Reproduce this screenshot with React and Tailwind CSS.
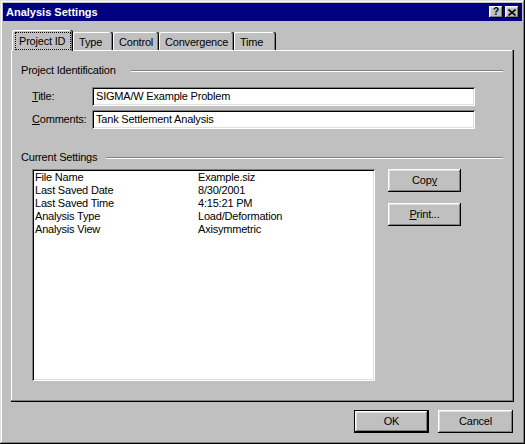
const raised =
    'shadow-[inset_-1px_-1px_#000,inset_1px_1px_#fff,inset_-2px_-2px_#808080,inset_2px_2px_#dfdfdf]'
const sunken =
    'shadow-[inset_1px_1px_#808080,inset_-1px_-1px_#fff,inset_2px_2px_#000,inset_-2px_-2px_#dfdfdf]'

const settings = [
    ['File Name', 'Example.siz'],
    ['Last Saved Date', '8/30/2001'],
    ['Last Saved Time', '4:15:21 PM'],
    ['Analysis Type', 'Load/Deformation'],
    ['Analysis View', 'Axisymmetric'],
]

function TitleButton({ children }) {
    return (
        <div className={`w-[14px] h-[12px] bg-[#c0c0c0] flex items-center justify-center ${raised}`}>{children}</div>
    )
}

function Tab({ label, width, active }) {
    if (active) {
        return (
            <div
                className={`relative z-10 -mb-px h-[21px] ${width} bg-[#c0c0c0] rounded-t-[2px] pl-[3px] pr-[2px] pt-[2px] pb-[1px] flex shadow-[inset_-1px_0_#000,inset_-2px_0_#808080,inset_1px_1px_#fff]`}
            >
                <div className="flex-1 border border-dotted border-black flex items-center pl-[3px]">{label}</div>
            </div>
        )
    }
    return (
        <div
            className={`h-[18px] ${width} rounded-t-[2px] flex items-center pl-[6px] pt-[2px] shadow-[inset_-1px_0_#000,inset_-2px_0_#808080,inset_1px_1px_#fff]`}
        >
            {label}
        </div>
    )
}

function GroupHeading({ label, labelWidth }) {
    return (
        <div className="flex items-center h-[13px] pr-[11px]">
            <span className={`shrink-0 ${labelWidth}`}>{label}</span>
            <div className="flex-1 h-[2px] border-t border-t-[#808080] border-b border-b-white" />
        </div>
    )
}

function Field({ label, value }) {
    return (
        <div className="flex items-center h-[19px] ml-[11px]">
            <span className="w-[60px] shrink-0">{label}</span>
            <div className={`w-[383px] h-[19px] bg-white flex items-center pl-[4px] ${sunken}`}>{value}</div>
        </div>
    )
}

function Button({ children, width = 'w-[73px]', isDefault = false }) {
    if (isDefault) {
        return (
            <div className={`${width} h-[23px] border border-black`}>
                <div className={`w-full h-full flex items-center justify-center bg-[#c0c0c0] ${raised}`}>{children}</div>
            </div>
        )
    }
    return (
        <div className={`${width} h-[23px] flex items-center justify-center bg-[#c0c0c0] ${raised}`}>{children}</div>
    )
}

export default function App() {
    return (
        <div className="w-[525px] h-[444px] bg-[#c0c0c0] p-[3px] flex flex-col text-black text-[11px] leading-[13px] tracking-[-0.2px] font-['Liberation_Sans',Arial,sans-serif] shadow-[inset_-1px_-1px_#000,inset_1px_1px_#dfdfdf,inset_-2px_-2px_#808080,inset_2px_2px_#fff]">
            <div className="h-[18px] bg-[#000080] flex items-center justify-between pl-[3px] pr-[3px]">
                <span className="text-white font-bold tracking-normal">Analysis Settings</span>
                <div className="flex gap-[2px]">
                    <TitleButton>
                        <span className="font-bold text-[10px] leading-none tracking-normal">?</span>
                    </TitleButton>
                    <TitleButton>
                        <svg width="8" height="7" viewBox="0 0 8 7">
                            <path d="M0.5 0.5 L7.5 6.5 M7.5 0.5 L0.5 6.5" stroke="#000" strokeWidth="1.6" fill="none" />
                        </svg>
                    </TitleButton>
                </div>
            </div>

            <div className="flex flex-col pl-[8px] pt-[9px]">
                <div className="flex items-end pl-[1px]">
                    <Tab label="Project ID" width="w-[61px]" active />
                    <Tab label="Type" width="w-[40px]" />
                    <Tab label="Control" width="w-[46px]" />
                    <Tab label="Convergence" width="w-[75px]" />
                    <Tab label="Time" width="w-[42px]" />
                </div>

                <div className="w-[503px] h-[352px] flex flex-col pl-[10px] pt-[14px] shadow-[inset_-1px_-1px_#000,inset_-2px_-2px_#808080,inset_1px_1px_#fff]">
                    <GroupHeading label="Project Identification" labelWidth="w-[110px]" />
                    <div className="flex flex-col gap-[4px] mt-[10px]">
                        <Field label={<><u>T</u>itle:</>} value="SIGMA/W Example Problem" />
                        <Field label={<><u>C</u>omments:</>} value="Tank Settlement Analysis" />
                    </div>

                    <div className="mt-[22px]">
                        <GroupHeading label="Current Settings" labelWidth="w-[85px]" />
                    </div>

                    <div className="flex mt-[5px] ml-[11px]">
                        <div className={`w-[343px] h-[212px] bg-white pt-[2px] pl-[3px] ${sunken}`}>
                            {settings.map(([name, value]) => (
                                <div key={name} className="flex h-[13px]">
                                    <span className="w-[163px] shrink-0">{name}</span>
                                    <span>{value}</span>
                                </div>
                            ))}
                        </div>
                        <div className="flex flex-col gap-[11px] ml-[13px]">
                            <Button>
                                Cop<u>y</u>
                            </Button>
                            <Button>
                                <u>P</u>rint...
                            </Button>
                        </div>
                    </div>
                </div>

                <div className="w-[503px] flex justify-end gap-[9px] pr-[1px] mt-[8px]">
                    <Button width="w-[75px]" isDefault>
                        OK
                    </Button>
                    <Button width="w-[75px]">Cancel</Button>
                </div>
            </div>
        </div>
    )
}
